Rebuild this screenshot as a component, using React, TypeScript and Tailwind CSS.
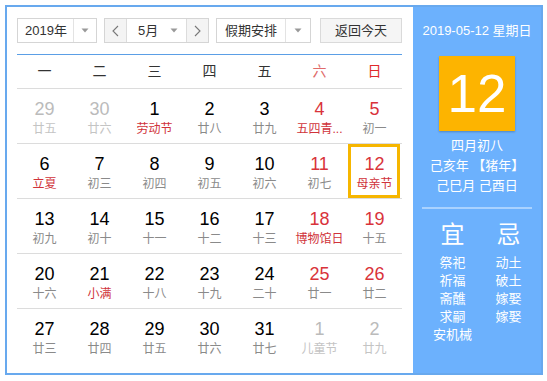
import React from "react";

type Day = { n: number; l: string; muted?: boolean; red?: boolean; lred?: boolean; today?: boolean };

const rows: Day[][] = [
  [
    { n: 29, l: "廿五", muted: true },
    { n: 30, l: "廿六", muted: true },
    { n: 1, l: "劳动节", lred: true },
    { n: 2, l: "廿八" },
    { n: 3, l: "廿九" },
    { n: 4, l: "五四青...", red: true, lred: true },
    { n: 5, l: "初一", red: true },
  ],
  [
    { n: 6, l: "立夏", lred: true },
    { n: 7, l: "初三" },
    { n: 8, l: "初四" },
    { n: 9, l: "初五" },
    { n: 10, l: "初六" },
    { n: 11, l: "初七", red: true },
    { n: 12, l: "母亲节", red: true, lred: true, today: true },
  ],
  [
    { n: 13, l: "初九" },
    { n: 14, l: "初十" },
    { n: 15, l: "十一" },
    { n: 16, l: "十二" },
    { n: 17, l: "十三" },
    { n: 18, l: "博物馆日", red: true, lred: true },
    { n: 19, l: "十五", red: true },
  ],
  [
    { n: 20, l: "十六" },
    { n: 21, l: "小满", lred: true },
    { n: 22, l: "十八" },
    { n: 23, l: "十九" },
    { n: 24, l: "二十" },
    { n: 25, l: "廿一", red: true },
    { n: 26, l: "廿二", red: true },
  ],
  [
    { n: 27, l: "廿三" },
    { n: 28, l: "廿四" },
    { n: 29, l: "廿五" },
    { n: 30, l: "廿六" },
    { n: 31, l: "廿七" },
    { n: 1, l: "儿童节", muted: true },
    { n: 2, l: "廿九", muted: true },
  ],
];

const weekdays = ["一", "二", "三", "四", "五", "六", "日"];

function Caret() {
  return (
    <svg width="8" height="5" viewBox="0 0 8 5">
      <path d="M0.5 0.5 L7.5 0.5 L4 4.5 Z" fill="#999" />
    </svg>
  );
}

function Chevron({ right }: { right?: boolean }) {
  return (
    <svg width="7" height="12" viewBox="0 0 7 12">
      <path
        d={right ? "M1 1 L6 6 L1 11" : "M6 1 L1 6 L6 11"}
        fill="none"
        stroke="#777"
        strokeWidth="1.1"
      />
    </svg>
  );
}

function DayCell({ d }: { d: Day }) {
  const numColor = d.muted ? "text-[#bbb]" : d.red ? "text-[#d9333a]" : "text-black";
  const lunarColor = d.muted ? "text-[#c4c4c4]" : d.lred ? "text-[#d0333a]" : "text-[#8a8a8a]";
  return (
    <div className="relative flex flex-col items-center pt-[10px]">
      <div className={`text-[18px] leading-[20px] ${numColor}`}>{d.n}</div>
      <div className={`mt-[2px] text-[12px] leading-[16px] whitespace-nowrap ${lunarColor}`}>{d.l}</div>
      {d.today && (
        <div className="absolute top-0 bottom-0 left-[1px] right-[2px] border-[3px] border-[#f6b600]" />
      )}
    </div>
  );
}

export default function App() {
  return (
    <div
      className="bg-white w-[547px] h-[381px] pt-[5px] pl-[5px]"
      style={{ fontFamily: '"Liberation Sans", "Noto Sans CJK SC", sans-serif' }}
    >
      <div className="flex w-[538px] h-[370px] border-2 border-[#68a9ee]">
        {/* Calendar */}
        <div className="w-[406px] pl-[10px] pr-[11px] pt-[11px]">
          <div className="flex h-[25px] text-[13px] text-[#333]">
            <div className="flex w-[80px] border border-[#d5d5d5] bg-white">
              <div className="flex-1 flex items-center pl-[7px]">2019年</div>
              <div className="w-[23px] flex items-center justify-center border-l border-[#e3e3e3]">
                <Caret />
              </div>
            </div>
            <div className="ml-[7px] flex w-[105px] border border-[#d5d5d5]">
              <div className="w-[22px] flex items-center justify-center bg-[#f4f4f4] border-r border-[#dcdcdc]">
                <Chevron />
              </div>
              <div className="flex-1 flex items-center justify-between pl-[11px] pr-[8px]">
                <span>5月</span>
                <Caret />
              </div>
              <div className="w-[22px] flex items-center justify-center bg-[#f4f4f4] border-l border-[#dcdcdc]">
                <Chevron right />
              </div>
            </div>
            <div className="ml-[7px] flex w-[95px] border border-[#d5d5d5]">
              <div className="flex-1 flex items-center justify-center">假期安排</div>
              <div className="w-[25px] flex items-center justify-center border-l border-[#e3e3e3]">
                <Caret />
              </div>
            </div>
            <div className="ml-[9px] w-[82px] flex items-center justify-center border border-[#dadada] bg-[#f5f5f5]">
              返回今天
            </div>
          </div>

          <div className="mt-[11px] h-px bg-[#5b9fe6]" />

          <div className="grid grid-cols-7 h-[34px] items-center border-b border-[#dcdcdc] text-[14px] text-[#333]">
            {weekdays.map((w, i) => (
              <div
                key={w}
                className={`text-center ${i === 5 ? "text-[#e06a6a]" : i === 6 ? "text-[#e02a2a]" : ""}`}
              >
                {w}
              </div>
            ))}
          </div>

          {rows.map((r, ri) => (
            <div
              key={ri}
              className={`grid grid-cols-7 h-[55px] ${ri < rows.length - 1 ? "border-b border-[#dcdcdc]" : ""}`}
            >
              {r.map((d, di) => (
                <DayCell key={di} d={d} />
              ))}
            </div>
          ))}
        </div>

        {/* Side panel */}
        <div className="flex-1 bg-[#6cb1fd] flex flex-col items-center pt-[14px] text-white">
          <div className="text-[13px] leading-[20px]">2019-05-12 星期日</div>
          <div className="mt-[15px] w-[76px] h-[75px] bg-[#fdb400] shadow-[0_1px_2px_rgba(0,0,0,0.25)] flex items-center justify-center text-[53px] leading-none">
            12
          </div>
          <div className="mt-[5px] text-[13px] leading-[20px] text-center">
            <div>四月初八</div>
            <div>己亥年 【猪年】</div>
            <div>己巳月 己酉日</div>
          </div>
          <div className="mt-[11px] w-[110px] h-[2px] bg-[#a9d2ff]" />
          <div className="mt-[12px] flex gap-[21px] pl-[2px]">
            <div className="flex flex-col items-center w-[40px]">
              <div className="text-[24px] leading-[28px]">宜</div>
              <div className="mt-[5px] text-[13px] leading-[18px] flex flex-col items-center">
                <div>祭祀</div>
                <div>祈福</div>
                <div>斋醮</div>
                <div>求嗣</div>
                <div>安机械</div>
              </div>
            </div>
            <div className="flex flex-col items-center w-[30px]">
              <div className="text-[24px] leading-[28px]">忌</div>
              <div className="mt-[5px] text-[13px] leading-[18px] flex flex-col items-center">
                <div>动土</div>
                <div>破土</div>
                <div>嫁娶</div>
                <div>嫁娶</div>
              </div>
            </div>
          </div>
        </div>
      </div>
    </div>
  );
}
